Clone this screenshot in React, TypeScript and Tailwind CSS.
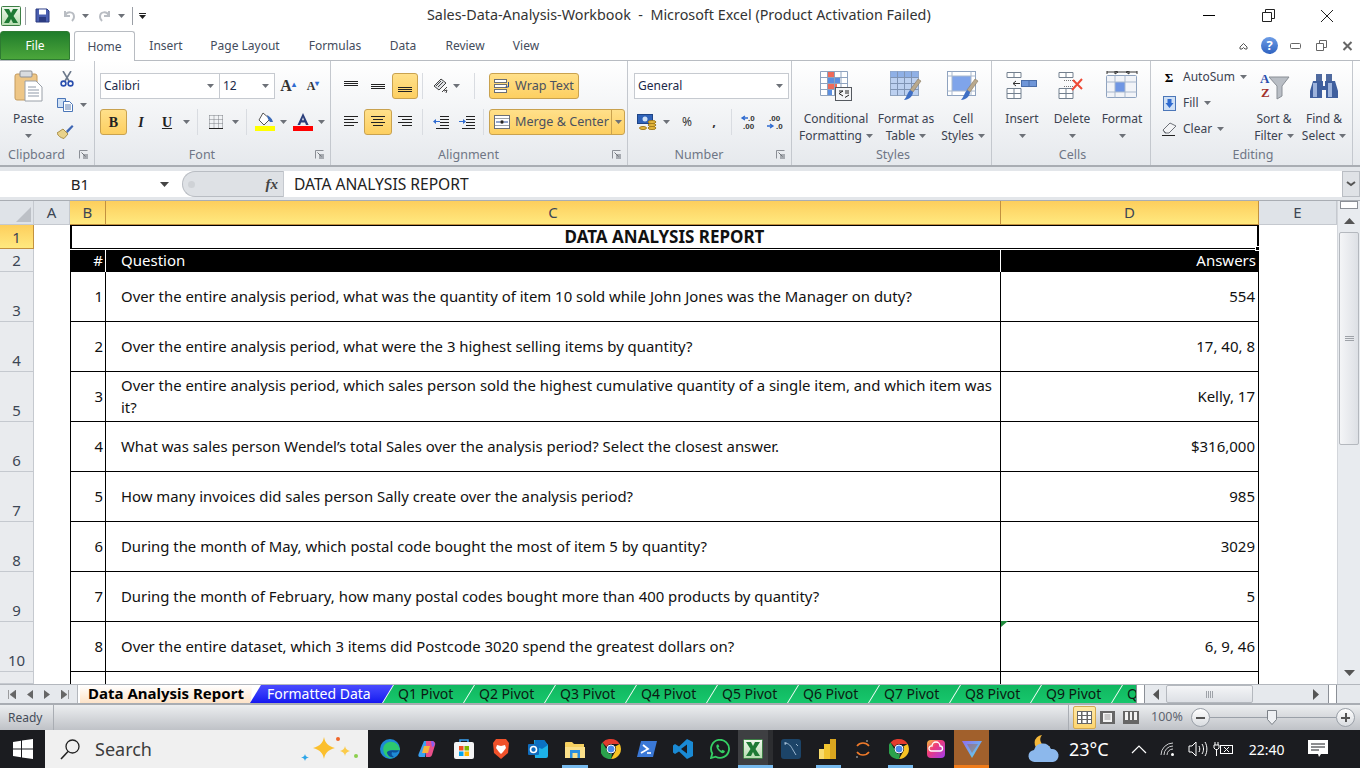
// App.tsx - Excel 2010 window
import type { ReactNode } from 'react'

const Caret = ({ className = '' }: { className?: string }) => (
  <svg width="7" height="4" viewBox="0 0 7 4" className={'shrink-0 ' + className}><path d="M0 0h7L3.5 4z" fill="#6d7178" /></svg>
)

const Launcher = () => (
  <svg width="10" height="10" viewBox="0 0 10 10"><path d="M.5.5h8M.5.5v8" stroke="#8b8f96" fill="none" /><rect x="4" y="4" width="5" height="5" fill="#a6aab0" /><path d="M2.5 2.5l4 4" stroke="#70747a" /></svg>
)

// the double line between two ribbon groups
function Group({ className, label, launcher, children }: { className: string; label: string; launcher?: boolean; children: ReactNode }) {
  return (
    <div className={'flex flex-col h-full border-r border-[#c4c8ce] ' + className}>
      <div className="h-[85px] flex">{children}</div>
      <div className={'h-[20px] flex items-center relative pt-px ' + (launcher ? 'pr-[21px]' : 'pl-[3px]')}>
        <div className="w-full text-center text-[12.5px] text-[#6f7685]">{label}</div>
        {launcher && <div className="absolute right-[5px] top-[5px]"><Launcher /></div>}
      </div>
    </div>
  )
}

function BigBtn({ className, icon, l1, l2, caretOwn }: { className: string; icon: ReactNode; l1: string; l2?: string; caretOwn?: boolean }) {
  return (
    <div className={'flex flex-col items-center pt-[9px] shrink-0 ' + className}>
      <div className="h-[32px] mb-[8px] flex items-center justify-center">{icon}</div>
      <div className="text-[12px] leading-[17px] text-[#3b4250] whitespace-nowrap">{l1}</div>
      {caretOwn
        ? <div className="h-[17px] flex items-center"><Caret /></div>
        : <div className="text-[12px] leading-[17px] text-[#3b4250] whitespace-nowrap flex items-center gap-[4px]">{l2}<Caret /></div>}
    </div>
  )
}

const Slot = ({ className, hi, children }: { className: string; hi?: boolean; children?: ReactNode }) => (
  <div className={'h-[26px] flex items-center justify-center shrink-0 ' + (hi ? 'rounded-[3px] border border-[#c9a24f] bg-gradient-to-b from-[#ffe08a] to-[#fdcf60] ' : '') + className}>{children}</div>
)

const Sep = ({ className }: { className: string }) => (
  <div className={'h-[26px] flex justify-center shrink-0 ' + className}><div className="w-px h-full bg-[#d9dce1]" /></div>
)

const Combo = ({ className, text }: { className: string; text: string }) => (
  <div className={'h-[26px] bg-white border border-[#c6cad0] flex items-center justify-between pl-[3px] pr-[5px] text-[12px] text-[#1b2a4a] shrink-0 ' + className}>
    <span>{text}</span><Caret />
  </div>
)

const Lines = ({ ys, x1s }: { ys: number[]; x1s?: [number, number][] }) => (
  <svg width="16" height="16" viewBox="0 0 16 16">
    {ys.map((y, i) => <path key={i} d={`M${x1s ? x1s[i][0] : 1} ${y + 0.5}H${x1s ? x1s[i][1] : 15}`} stroke="#222" />)}
  </svg>
)

const WinBox = () => <svg width="13" height="13" viewBox="0 0 13 13"><path d="M.5 3.5h9v9h-9zM3.5 3.5v-3h9v9h-3" fill="none" stroke="#222" /></svg>

// ---- ribbon icons ----
const PasteIcon = () => (
  <svg width="30" height="32" viewBox="0 0 30 32">
    <rect x="1" y="4" width="22" height="26" rx="2" fill="#eec686" stroke="#c49b5e" />
    <rect x="6" y="1" width="12" height="6" rx="1" fill="#d9dce0" stroke="#8b8f96" />
    <path d="M11 11h11l6 6v14H11z" fill="#fff" stroke="#9aa0a8" />
    <path d="M14 17h8M14 20h11M14 23h11M14 26h11" stroke="#8f99a8" />
  </svg>
)
const CutIcon = () => (
  <svg width="14" height="16" viewBox="0 0 14 16"><path d="M3 0l6 10M11 0L5 10" stroke="#6d7a8c" strokeWidth="1.6" /><circle cx="3.5" cy="12.5" r="2.4" fill="none" stroke="#2a4fae" strokeWidth="1.6" /><circle cx="10.5" cy="12.5" r="2.4" fill="none" stroke="#2a4fae" strokeWidth="1.6" /></svg>
)
const CopyIcon = () => (
  <svg width="16" height="14" viewBox="0 0 16 14"><path d="M.5.5h8v9h-8z" fill="#cfe0f5" stroke="#4b76b8" /><path d="M6.5 3.5h6l3 3v7h-9z" fill="#fff" stroke="#4b76b8" /><path d="M8 7h6M8 9h6M8 11h6" stroke="#5a7cb0" /></svg>
)
const PainterIcon = () => (
  <svg width="17" height="15" viewBox="0 0 17 15"><path d="M0 9l6-4 5 5-4 4.5C4 14 1 12 0 9z" fill="#e9d28a" stroke="#a98f4a" /><path d="M9 7l6-6 1.5 1.5-6 6.5z" fill="#3e66b3" /></svg>
)
const FillIcon = () => (
  <svg width="20" height="20" viewBox="0 0 20 20"><path d="M8 1l7 6-6 6-5-5z" fill="#fff" stroke="#555" /><path d="M12 3c2 1 5 3 6 7h-3l-2-3z" fill="#3b6ab8" /><rect x="0" y="14" width="20" height="5" fill="#ffff00" /></svg>
)
const FontColorIcon = () => (
  <svg width="20" height="20" viewBox="0 0 20 20"><path d="M10 1L4.5 13h2.6l1-2.6h3.9l1 2.6h2.6zM9 8.3l1-3 1 3z" fill="#2b3f7c" /><rect x="0" y="14" width="20" height="5" fill="#ff0000" /></svg>
)
const CellGrid = () => (
  <svg width="14" height="14" viewBox="0 0 14 14"><path d="M.5.5h13M.5 4.500h13M.5 8.500h13M.5.5v13M5 .5v13M9.500.5v13M13.500.5v13" stroke="#7d8187" strokeDasharray="1 1" /><path d="M0 13.500h14" stroke="#222" /></svg>
)
const OrientIcon = () => (
  <svg width="16" height="16" viewBox="0 0 16 16"><path d="M1 8l7-7 5 4-7 7z" fill="#dfe2e6" stroke="#444" /><path d="M3 8l5-5M5 9l5-5" stroke="#444" /><path d="M9 14l5-5M11 13l3-1-1 3" stroke="#444" fill="none" /></svg>
)
const IndentIcon = ({ flip }: { flip?: boolean }) => (
  <svg width="16" height="16" viewBox="0 0 16 16"><path d="M7 2.5h9M7 5.5h9M7 8.5h9M7 11.5h9M3 14.5h13" stroke="#222" /><path d={flip ? 'M0 7h4V5l3 2.5L4 10V8H0z' : 'M7 7H3V5L0 7.5 3 10V8h4z'} fill="#2f6bd0" /></svg>
)
const WrapIcon = () => (
  <svg width="17" height="15" viewBox="0 0 17 15"><rect x=".5" y=".5" width="12" height="3" fill="#fff" stroke="#6b6f76" /><rect x=".5" y="5.5" width="12" height="3" fill="#fff" stroke="#6b6f76" /><rect x=".5" y="10.5" width="12" height="3" fill="#fff" stroke="#6b6f76" /><path d="M14.500 3v5h-3" fill="none" stroke="#2b4f9a" /></svg>
)
const MergeIcon = () => (
  <svg width="16" height="14" viewBox="0 0 16 14"><rect x=".5" y=".5" width="15" height="13" fill="#fff" stroke="#6b6f76" /><path d="M1 3.500h14M1 10.500h14" stroke="#9da2a9" /><path d="M2 7h4M14 7h-4" stroke="#2b4f9a" /><circle cx="8" cy="7" r="1.800" fill="#222" /></svg>
)
const MoneyIcon = () => (
  <svg width="20" height="17" viewBox="0 0 20 17"><rect x=".5" y=".5" width="15" height="9" fill="#2f62b8" stroke="#1e4486" /><circle cx="8" cy="5" r="2.500" fill="#cfe0f5" /><ellipse cx="15" cy="8" rx="4" ry="1.500" fill="#e8b93f" stroke="#a17b1d" /><ellipse cx="15" cy="11" rx="4" ry="1.500" fill="#e8b93f" stroke="#a17b1d" /><ellipse cx="15" cy="14" rx="4" ry="1.500" fill="#e8b93f" stroke="#a17b1d" /><ellipse cx="6" cy="14" rx="3.500" ry="1.500" fill="#e8b93f" stroke="#a17b1d" /></svg>
)
const DecIcon = ({ more }: { more?: boolean }) => (
  <svg width="20" height="15" viewBox="0 0 20 15">
    <path d={more ? 'M1 11h6M4 9l3 2-3 2' : 'M8 3H2M5 1L2 3l3 2'} stroke="#2f6bd0" fill="none" strokeWidth="1.300" />
    <text x={more ? 3 : 8} y="6" fontSize="8" fontWeight="700" fontFamily="Liberation Sans, sans-serif" fill="#333">{more ? '.00' : '.0'}</text>
    <text x={more ? 10 : 3} y="14" fontSize="8" fontWeight="700" fontFamily="Liberation Sans, sans-serif" fill="#333">{more ? '.0' : '.00'}</text>
  </svg>
)
const Brush = () => (
  <g><path d="M28 8l3 2-8 11-3-2z" fill="#b9a98e" stroke="#8a7b62" strokeWidth=".6" /><path d="M20 19l3 2c0 4-4 8-9 8 3-3 3-7 6-10z" fill="#3f6fc4" /></g>
)
const CondIcon = () => (
  <svg width="32" height="30" viewBox="0 0 32 30">
    <path d="M.5.5h27v24H.5z" fill="#fff" stroke="#8fa3bf" />
    <rect x="7" y="1" width="7" height="5" fill="#ee6a5a" /><rect x="7" y="7" width="13" height="5" fill="#5b8fe0" /><rect x="7" y="13" width="10" height="5" fill="#ee6a5a" /><rect x="7" y="19" width="5" height="5" fill="#5b8fe0" />
    <path d="M7.500.5v24M14.500.5v24M21 .5v24M.5 6.500h27M.5 12.500h27M.5 18.500h27" stroke="#8fa3bf" fill="none" />
    <rect x="15.500" y="16.500" width="16" height="13" fill="#f4f5f7" stroke="#55595f" />
    <path d="M19 20h4l-4 2.500 4 2.500M25 20h4M25 22h4M29 24l-4 2.500" stroke="#222" fill="none" />
  </svg>
)
const TableIcon = () => (
  <svg width="32" height="30" viewBox="0 0 32 30">
    <rect x=".5" y=".5" width="28" height="24" fill="#bcd0f0" stroke="#8fa3bf" />
    <rect x=".5" y=".5" width="28" height="6" fill="#8fb0e6" />
    <path d="M7.500.5v24M14.500.5v24M21.500.5v24M.5 6.500h28M.5 12.500h28M.5 18.500h28" stroke="#7f94b5" fill="none" /><Brush />
  </svg>
)
const StylesIcon = () => (
  <svg width="32" height="30" viewBox="0 0 32 30">
    <rect x=".5" y=".5" width="28" height="24" fill="#fff" stroke="#8fa3bf" />
    <rect x="5" y="5" width="19" height="15" fill="#7fa4ea" />
    <path d="M5 .5v24M24 .5v24M.5 5h28M.5 20h28" stroke="#a9b8cd" fill="none" /><Brush />
  </svg>
)
const InsertIcon = () => (
  <svg width="32" height="28" viewBox="0 0 32 28">
    <path d="M1 .5h14v5H1zM8 .5v5M1 16.500h14v10H1zM8 16.500v10M1 21.500h14" fill="#fff" stroke="#73808f" />
    <rect x="15.500" y="8.500" width="15" height="6" fill="#6f96d8" stroke="#4b6ea8" /><path d="M23 8.500v6" stroke="#4b6ea8" />
    <path d="M7 11.500h7M7 11.500l3-2.500M7 11.500l3 2.500" stroke="#333" fill="none" />
  </svg>
)
const DeleteIcon = () => (
  <svg width="28" height="28" viewBox="0 0 28 28">
    <path d="M1 .5h14v5H1zM8 .5v5M1 16.500h14v10H1zM8 16.500v10M1 21.500h14" fill="#fff" stroke="#73808f" />
    <path d="M6 8.500h12M6 14.500h12" stroke="#777" strokeDasharray="1 1" />
    <path d="M15 8l9 9M24 7l-10 11" stroke="#ee4a36" strokeWidth="2" />
  </svg>
)
const FormatIcon = () => (
  <svg width="32" height="30" viewBox="0 0 32 30">
    <path d="M1 1h30M1 0v3M31 0v3M12 1l-3-1v3zM20 1l3-1v3z" stroke="#333" fill="none" />
    <rect x=".5" y="4.500" width="30" height="22" rx="1" fill="#f2f4f8" stroke="#8fa3bf" />
    <rect x="9" y="11" width="10" height="10" fill="#6f96e4" />
    <path d="M9 4.500v22M19 4.500v22M.5 11h30M.5 21h30" stroke="#a9b8cd" fill="none" />
  </svg>
)
const SigmaIcon = () => <div className="text-[13px] font-bold leading-none text-black [font-family:'Liberation_Serif',serif]">Σ</div>
const FillDownIcon = () => (
  <svg width="13" height="15" viewBox="0 0 13 15"><rect x=".5" y=".5" width="12" height="14" fill="#cfe0f5" stroke="#4b76b8" /><path d="M4.500 3h4v4h2l-4 5-4-5h2z" fill="#2f6bd0" /></svg>
)
const EraserIcon = () => (
  <svg width="15" height="14" viewBox="0 0 15 14"><path d="M1 8l7-7 6 3-7 7H3z" fill="#f3f4f6" stroke="#6d7178" /><path d="M1 8l3 3" stroke="#6d7178" /><path d="M0 13.500h13" stroke="#222" /></svg>
)
const SortIcon = () => (
  <svg width="31" height="30" viewBox="0 0 31 30">
    <path d="M10 6h20l-7 9v10l-5 3V15z" fill="#b9bec5" stroke="#8a8f96" />
    <text x="1" y="12" fontSize="13" fontWeight="700" fontFamily="Liberation Serif, serif" fill="#2a4fae">A</text>
    <text x="2" y="26" fontSize="13" fontWeight="700" fontFamily="Liberation Serif, serif" fill="#a3322c">Z</text>
  </svg>
)
const FindIcon = () => (
  <svg width="28" height="26" viewBox="0 0 28 26">
    <path d="M6 1h6v7H6zM16 1h6v7h-6z" fill="#4f6a9f" />
    <path d="M3 8h10v5h2V8h10l3 10v7H16v-8h-4v8H0v-7z" fill="#3f5f9e" />
    <path d="M3 10h4v14H3zM18 10h4v14h-4z" fill="#9db3dc" />
  </svg>
)

// ---- sheet data ----
const rows = [
  { n: 3, id: '1', q: 'Over the entire analysis period, what was the quantity of item 10 sold while John Jones was the Manager on duty?', a: '554' },
  { n: 4, id: '2', q: 'Over the entire analysis period, what were the 3 highest selling items by quantity?', a: '17, 40, 8' },
  { n: 5, id: '3', q: 'Over the entire analysis period, which sales person sold the highest cumulative quantity of a single item, and which item was', q2: 'it?', a: 'Kelly, 17' },
  { n: 6, id: '4', q: 'What was sales person Wendel’s total Sales over the analysis period? Select the closest answer.', a: '$316,000' },
  { n: 7, id: '5', q: 'How many invoices did sales person Sally create over the analysis period?', a: '985' },
  { n: 8, id: '6', q: 'During the month of May, which postal code bought the most of item 5 by quantity?', a: '3029' },
  { n: 9, id: '7', q: 'During the month of February, how many postal codes bought more than 400 products by quantity?', a: '5' },
  { n: 10, id: '8', q: 'Over the entire dataset, which 3 items did Postcode 3020 spend the greatest dollars on?', a: '6, 9, 46', flag: true },
]

const ColHead = ({ className, hi, children }: { className: string; hi?: boolean; children: ReactNode }) => (
  <div className={'h-full flex items-center justify-center text-[15px] text-[#3c4654] border-b border-r shrink-0 ' + (hi ? 'bg-gradient-to-b from-[#fdce5c] to-[#ffe97f] border-[#c2913f] ' : 'bg-[#dfe3e8] border-[#c5c9cf] ') + className}>{children}</div>
)
const RowHead = ({ n, hi }: { n: number | ''; hi?: boolean }) => (
  <div className={'w-[34px] h-full shrink-0 flex items-end justify-center text-[15px] leading-[20px] text-[#3c4654] border-b border-r pb-px ' + (hi ? 'bg-gradient-to-b from-[#fdce5c] to-[#ffe97f] border-[#c2913f]' : 'bg-[#e9ebee] border-[#c5c9cf]')}>{n}</div>
)

function DataRow({ r }: { r: (typeof rows)[number] }) {
  return (
    <div className="flex h-[50px] shrink-0">
      <RowHead n={r.n} />
      <div className="w-[36px] shrink-0" />
      <div className="w-[36px] shrink-0 border border-t-0 border-black flex items-center justify-end pr-[2px] pb-px text-[14.9px] text-[#111]">{r.id}</div>
      <div className="w-[895px] shrink-0 border-b border-r border-black flex items-center pl-[15px] pb-[2px] text-[14.9px] leading-[22px] text-[#111]">
        <div className="whitespace-nowrap">{r.q}{r.q2 && <><br />{r.q2}</>}</div>
      </div>
      <div className="w-[258px] shrink-0 border-b border-r border-black flex items-center justify-end pr-[3px] pb-px text-[15px] text-[#111] relative">
        {r.flag && <svg width="7" height="6" viewBox="0 0 7 6" className="absolute left-0 -top-px"><path d="M0 0h7L0 6z" fill="#1f8a3c" /></svg>}
        {r.a}
      </div>
    </div>
  )
}

// ---- bottom sheet tabs ----
const qTabs = ['Q1 Pivot', 'Q2 Pivot', 'Q3 Pivot', 'Q4 Pivot', 'Q5 Pivot', 'Q6 Pivot', 'Q7 Pivot', 'Q8 Pivot', 'Q9 Pivot', 'Q']

// ---- taskbar logos ----
const ChromeLogo = () => (
  <svg width="20" height="20" viewBox="0 0 20 20">
    <path d="M10 0a10 10 0 0 1 8.660 5H10a5 5 0 0 0-4.500 2.800L1.500 3.500A10 10 0 0 1 10 0z" fill="#e33b2e" />
    <path d="M18.660 5A10 10 0 0 1 10 20l4.300-7.500A5 5 0 0 0 14.300 7.500z" fill="#f7c325" />
    <path d="M10 20A10 10 0 0 1 1.500 3.500l4 7A5 5 0 0 0 11 15z" fill="#2ba24c" />
    <circle cx="10" cy="10" r="4" fill="#4a88ec" stroke="#fff" />
  </svg>
)
const ExcelMark = () => (
  <svg width="20" height="20" viewBox="0 0 20 20">
    <defs><linearGradient id="xl" x1="0" y1="0" x2="0" y2="1"><stop offset="0" stopColor="#f1f8ee" /><stop offset="1" stopColor="#b5dcae" /></linearGradient></defs>
    <rect x=".5" y=".5" width="19" height="19" rx="1" fill="url(#xl)" stroke="#3d7f45" />
    <path d="M3 3h5l2 4 2-4h5l-4.500 7 4.500 7h-5l-2-4-2 4H3l4.500-7z" fill="#1f7a35" />
  </svg>
)
const TaskIcon = ({ className, children }: { className: string; children: ReactNode }) => (
  <div className={'h-full flex items-center justify-center shrink-0 relative ' + className}>{children}</div>
)
const Underline = ({ className }: { className: string }) => <div className={'absolute bottom-0 h-[3px] bg-[#76b9ed] ' + className} />

export default function App() {
  return (
    <div className="w-[1360px] h-[768px] overflow-hidden flex flex-col bg-white [font-family:'Noto_Sans',sans-serif]">
      {/* title bar */}
      <div className="h-[31px] flex items-center relative shrink-0">
        <div className="ml-[1px]"><ExcelMark /></div>
        <div className="w-px h-[18px] bg-[#9a9ea5] ml-[4px]" />
        <svg width="15" height="15" viewBox="0 0 15 15" className="ml-[9px]"><path d="M1 1h11l2 2v11H1z" fill="#4a5fb0" stroke="#2b3b80" /><rect x="4" y="1.500" width="7" height="5" fill="#fff" /><rect x="4" y="9" width="7" height="5" fill="#2b3b80" /></svg>
        <svg width="13" height="13" viewBox="0 0 13 13" className="ml-[13px]"><path d="M2 2v5h5M2 7c2-5 9-5 9 1 0 2-1 3-2 4" fill="none" stroke="#b9bdc3" strokeWidth="2" /></svg>
        <Caret className="ml-[6px]" />
        <svg width="13" height="13" viewBox="0 0 13 13" className="ml-[9px]"><path d="M11 2v5H6M11 7C9 2 2 2 2 8c0 2 1 3 2 4" fill="none" stroke="#b9bdc3" strokeWidth="2" /></svg>
        <Caret className="ml-[7px]" />
        <div className="w-px h-[18px] bg-[#9a9ea5] ml-[7px]" />
        <svg width="7" height="6" viewBox="0 0 7 6" className="ml-[6px]"><path d="M0 0h7v1H0zM0 2h7L3.500 6z" fill="#222" /></svg>
        <div className="absolute left-[427px] top-[5px] text-[14.35px] leading-[20px] text-[#333] whitespace-pre">Sales-Data-Analysis-Workbook  -  Microsoft Excel (Product Activation Failed)</div>
        <div className="ml-auto flex items-center pr-[3px]">
          <div className="w-[60px] flex justify-center"><div className="w-[12px] h-px bg-black" /></div>
          <div className="w-[58px] flex justify-center"><WinBox /></div>
          <div className="w-[60px] flex justify-center"><svg width="14" height="14" viewBox="0 0 14 14"><path d="M1 1l12 12M13 1L1 13" stroke="#222" /></svg></div>
        </div>
      </div>

      {/* ribbon tabs */}
      <div className="h-[29px] flex shrink-0 relative">
        <div className="w-[70px] h-full rounded-t-[3px] border border-[#2d7a31] bg-gradient-to-b from-[#1f7d2b] to-[#4aa63b] text-white text-[12px] flex items-center justify-center">File</div>
        <div className="ml-[4px] w-[61px] h-[30px] rounded-t-[3px] border border-b-0 border-[#b8bcc2] bg-white text-[12px] text-[#444c5c] flex items-center justify-center z-10">Home</div>
        {[['Insert', 'w-[62px]'], ['Page Layout', 'w-[96px]'], ['Formulas', 'w-[84px]'], ['Data', 'w-[52px]'], ['Review', 'w-[72px]'], ['View', 'w-[50px]']].map(([t, w]) => (
          <div key={t} className={'h-full text-[12px] text-[#444c5c] flex items-center justify-center ' + w}>{t}</div>
        ))}
        <div className="ml-auto flex items-center pr-[7px]">
          <svg width="9" height="8" viewBox="0 0 9 8"><path d="M1 7V5l3.500-3.500L8 5v2H6L4.500 5.500 3 7z" fill="none" stroke="#555" /></svg>
          <div className="ml-[13px] w-[17px] h-[17px] rounded-full bg-gradient-to-b from-[#6d9de6] to-[#2f62c0] text-white text-[13px] font-bold leading-none flex items-center justify-center">?</div>
          <svg width="11" height="6" viewBox="0 0 11 6" className="ml-[12px]"><rect x=".5" y=".5" width="10" height="5" rx="1" fill="none" stroke="#666" /></svg>
          <svg width="11" height="11" viewBox="0 0 11 11" className="ml-[15px]"><path d="M.5 3.500h7v7h-7zM3.500 3.500v-3h7v7h-3" fill="none" stroke="#666" /></svg>
          <svg width="11" height="10" viewBox="0 0 11 10" className="ml-[15px]"><path d="M1.500 1l8 8M9.500 1l-8 8" stroke="#666" strokeWidth="2" /></svg>
        </div>
      </div>

      {/* ribbon */}
      <div className="h-[107px] shrink-0 flex border-t border-b-2 border-t-[#b8bcc2] border-b-[#a9adb3] bg-gradient-to-b from-white to-[#e6e9ed]">
        <Group className="w-[95px]" label="Clipboard" launcher>
          <div className="w-[57px] flex flex-col items-center pt-[9px]">
            <div className="h-[32px] mb-[8px]"><PasteIcon /></div>
            <div className="text-[12px] leading-[17px] text-[#3b4250]">Paste</div>
            <div className="h-[17px] flex items-center"><Caret /></div>
          </div>
          <div className="flex flex-col pt-[5px]">
            <div className="h-[26px] flex items-center pl-[3px]"><CutIcon /></div>
            <div className="h-[26px] flex items-center gap-[7px]"><CopyIcon /><Caret /></div>
            <div className="h-[26px] flex items-center"><PainterIcon /></div>
          </div>
        </Group>

        <Group className="w-[236px]" label="Font" launcher>
          <div className="flex flex-col pt-[12px] pl-[5px] gap-[10px]">
            <div className="flex">
              <Combo className="w-[120px]" text="Calibri" />
              <Combo className="w-[56px] -ml-px" text="12" />
              <Slot className="w-[26px]"><span className="text-[16px] font-bold text-[#333] [font-family:'Liberation_Serif',serif]">A<sup className="text-[8px] text-[#2f6bd0]">▴</sup></span></Slot>
              <Slot className="w-[24px]"><span className="text-[12px] font-bold text-[#333] [font-family:'Liberation_Serif',serif]">A<sup className="text-[8px] text-[#2f6bd0]">▾</sup></span></Slot>
            </div>
            <div className="flex">
              <Slot hi className="w-[27px] text-[14px] font-bold text-[#222] [font-family:'Liberation_Serif',serif]">B</Slot>
              <Slot className="w-[28px] text-[14px] italic font-bold text-[#222] [font-family:'Liberation_Serif',serif]">I</Slot>
              <Slot className="w-[24px] text-[14px] font-bold underline text-[#222] [font-family:'Liberation_Serif',serif]">U</Slot>
              <Slot className="w-[14px]"><Caret /></Slot>
              <Sep className="w-[8px]" />
              <Slot className="w-[30px]"><CellGrid /></Slot>
              <Slot className="w-[8px]"><Caret /></Slot>
              <Sep className="w-[14px]" />
              <Slot className="w-[24px]"><FillIcon /></Slot>
              <Slot className="w-[12px]"><Caret /></Slot>
              <Slot className="w-[28px]"><FontColorIcon /></Slot>
              <Slot className="w-[8px]"><Caret /></Slot>
            </div>
          </div>
        </Group>

        <Group className="w-[297px]" label="Alignment" launcher>
          <div className="flex flex-col pt-[12px] pl-[7px] gap-[10px]">
            <div className="flex">
              <Slot className="w-[26px]"><Lines ys={[3, 5, 7]} /></Slot>
              <Slot className="w-[28px]"><Lines ys={[6, 8, 10]} /></Slot>
              <Slot hi className="w-[26px]"><Lines ys={[9, 11, 13]} /></Slot>
              <Sep className="w-[8px]" />
              <Slot className="ml-[7px] w-[16px]"><OrientIcon /></Slot>
              <Slot className="ml-[4px] w-[7px]"><Caret /></Slot>
              <Sep className="w-[29px]" />
              <Slot hi className="w-[90px] gap-[4px] text-[12.6px] text-[#4a5160]"><WrapIcon /><span>Wrap Text</span></Slot>
            </div>
            <div className="flex">
              <Slot className="w-[26px]"><Lines ys={[2, 5, 8, 11]} x1s={[[1, 15], [1, 11], [1, 15], [1, 11]]} /></Slot>
              <Slot hi className="w-[28px]"><Lines ys={[2, 5, 8, 11]} x1s={[[1, 15], [3, 13], [1, 15], [3, 13]]} /></Slot>
              <Slot className="w-[26px]"><Lines ys={[2, 5, 8, 11]} x1s={[[1, 15], [5, 15], [1, 15], [5, 15]]} /></Slot>
              <Sep className="w-[8px]" />
              <Slot className="ml-[5px] w-[20px]"><IndentIcon /></Slot>
              <Slot className="ml-[6px] w-[20px]"><IndentIcon flip /></Slot>
              <Sep className="w-[12px]" />
              <div className="h-[26px] w-[136px] flex rounded-[3px] border border-[#c9a24f] bg-gradient-to-b from-[#ffe08a] to-[#fdcf60] text-[12.6px] text-[#4a5160]">
                <div className="flex-1 flex items-center pl-[4px] gap-[5px] whitespace-nowrap"><MergeIcon /><span>Merge &amp; Center</span></div>
                <div className="w-[13px] border-l border-[#c9a24f] flex items-center justify-center"><Caret /></div>
              </div>
            </div>
          </div>
        </Group>

        <Group className="w-[164px]" label="Number" launcher>
          <div className="flex flex-col pt-[12px] pl-[6px] gap-[10px]">
            <Combo className="w-[155px]" text="General" />
            <div className="flex">
              <Slot className="w-[26px]"><MoneyIcon /></Slot>
              <Slot className="w-[12px]"><Caret /></Slot>
              <Slot className="w-[30px] text-[12px] text-[#333]">%</Slot>
              <Slot className="w-[24px] text-[13px] font-bold text-[#333]">,</Slot>
              <Sep className="w-[10px]" />
              <Slot className="ml-[2px] w-[24px]"><DecIcon /></Slot>
              <Slot className="ml-[2px] w-[24px]"><DecIcon more /></Slot>
            </div>
          </div>
        </Group>

        <Group className="w-[200px]" label="Styles">
          <BigBtn className="ml-[5px] w-[78px]" icon={<CondIcon />} l1="Conditional" l2="Formatting" />
          <BigBtn className="w-[62px]" icon={<TableIcon />} l1="Format as" l2="Table" />
          <BigBtn className="w-[52px]" icon={<StylesIcon />} l1="Cell" l2="Styles" />
        </Group>

        <Group className="w-[159px]" label="Cells">
          <BigBtn className="ml-[5px] w-[50px]" icon={<InsertIcon />} l1="Insert" caretOwn />
          <BigBtn className="w-[50px]" icon={<DeleteIcon />} l1="Delete" caretOwn />
          <BigBtn className="w-[50px]" icon={<FormatIcon />} l1="Format" caretOwn />
        </Group>

        <Group className="w-[202px]" label="Editing">
          <div className="w-[98px] flex flex-col pt-[3px] pl-[9px] text-[12px] text-[#3b4250]">
            <div className="h-[26px] flex items-center"><div className="w-[23px] flex justify-center pr-[5px]"><SigmaIcon /></div>AutoSum<Caret className="ml-[5px]" /></div>
            <div className="h-[26px] flex items-center"><div className="w-[23px] flex justify-center pr-[5px]"><FillDownIcon /></div>Fill<Caret className="ml-[5px]" /></div>
            <div className="h-[26px] flex items-center"><div className="w-[23px] flex justify-center pr-[5px]"><EraserIcon /></div>Clear<Caret className="ml-[5px]" /></div>
          </div>
          <BigBtn className="w-[50px]" icon={<SortIcon />} l1="Sort &" l2="Filter" />
          <BigBtn className="w-[50px]" icon={<FindIcon />} l1="Find &" l2="Select" />
        </Group>
      </div>

      {/* formula bar */}
      <div className="h-[34px] shrink-0 flex flex-col bg-[#e3e6ea]">
        <div className="h-[26px] mt-[4px] flex bg-white">
          <div className="w-[178px] flex items-center text-[15px] text-[#222] relative">
            <div className="w-[160px] text-center">B1</div>
            <svg width="9" height="5" viewBox="0 0 9 5"><path d="M0 0h9L4.500 5z" fill="#444" /></svg>
          </div>
          <div className="ml-[4px] w-[101px] rounded-l-full bg-[#dee1e5] border border-r-0 border-[#b9bdc3] flex items-center justify-between pl-[5px] pr-[5px]">
            <div className="w-[7px] h-[7px] rounded-full bg-[#cfd2d6]" />
            <span className="text-[15px] italic font-bold text-[#444] [font-family:'Liberation_Serif',serif]">fx</span>
          </div>
          <div className="flex-1 flex items-center pl-[10px] pt-px text-[15.6px] text-[#222] border-l border-[#c5c9cf]">DATA ANALYSIS REPORT</div>
          <div className="w-[18px] bg-[#dfe2e6] border border-[#b9bdc3] flex items-center justify-center">
            <svg width="10" height="7" viewBox="0 0 10 7"><path d="M1 1l4 3 4-3" fill="none" stroke="#555" strokeWidth="2" /></svg>
          </div>
        </div>
        <div className="mt-auto h-px bg-[#a9adb3]" />
      </div>

      {/* sheet */}
      <div className="h-[483px] shrink-0 flex">
        <div className="w-[1337px] shrink-0 flex flex-col overflow-hidden">
          <div className="h-[24px] flex shrink-0">
            <div className="w-[34px] h-full shrink-0 bg-[#dfe3e8] border-b border-r border-[#c5c9cf] flex items-end justify-end p-[2px]">
              <svg width="15" height="15" viewBox="0 0 15 15"><path d="M15 0v15H0z" fill="#bcc0c6" /></svg>
            </div>
            <ColHead className="w-[36px]">A</ColHead>
            <ColHead hi className="w-[36px]">B</ColHead>
            <ColHead hi className="w-[895px]">C</ColHead>
            <ColHead hi className="w-[258px]">D</ColHead>
            <ColHead className="w-[78px]">E</ColHead>
          </div>

          <div className="flex h-[24px] shrink-0 relative z-10">
            <RowHead n={1} hi />
            <div className="w-[36px] shrink-0" />
            <div className="w-[1189px] shrink-0 border-2 border-y border-black flex items-center justify-center text-[17px] font-bold text-[#111] relative">
              DATA ANALYSIS REPORT
              <div className="absolute -right-[3px] -bottom-[3px] w-[5px] h-[5px] bg-black border border-white" />
            </div>
          </div>

          <div className="flex h-[23px] shrink-0">
            <RowHead n={2} />
            <div className="w-[36px] shrink-0" />
            <div className="w-[36px] shrink-0 mt-px pb-[2px] bg-black border-r border-white text-white flex items-center justify-end pr-[2px] text-[15px]">#</div>
            <div className="w-[895px] shrink-0 mt-px pb-[2px] bg-black border-r border-white text-white flex items-center pl-[15px] text-[15px]">Question</div>
            <div className="w-[258px] shrink-0 mt-px pb-[2px] bg-black text-white flex items-center justify-end pr-[3px] text-[15px]">Answers</div>
          </div>

          {rows.map(r => <DataRow key={r.n} r={r} />)}

          <div className="flex h-[12px] shrink-0">
            <RowHead n="" />
            <div className="w-[36px] shrink-0" />
            <div className="w-[36px] shrink-0 border-x border-black" />
            <div className="w-[895px] shrink-0 border-r border-black" />
            <div className="w-[258px] shrink-0 border-r border-black" />
          </div>
        </div>

        {/* vertical scrollbar */}
        <div className="w-[23px] shrink-0 flex flex-col bg-[#e8ebef] border-l border-[#d3d6db]">
          <div className="h-[8px] mx-[2px] bg-white border border-[#8b8f96]" />
          <div className="h-[23px] flex items-center justify-center"><svg width="11" height="6" viewBox="0 0 11 6"><path d="M5.500 0L11 6H0z" fill="#555" /></svg></div>
          <div className="h-[213px] mx-px rounded-[2px] border border-[#b4b8be] bg-gradient-to-r from-[#f4f5f7] to-[#dde0e5] flex items-center justify-center">
            <svg width="9" height="6" viewBox="0 0 9 6"><path d="M0 .5h9M0 2.500h9M0 4.500h9" stroke="#9ea2a8" /></svg>
          </div>
          <div className="mt-auto h-[22px] flex items-center justify-center"><svg width="11" height="6" viewBox="0 0 11 6"><path d="M5.500 6L11 0H0z" fill="#555" /></svg></div>
        </div>
      </div>

      {/* tab strip */}
      <div className="h-[21px] shrink-0 flex border-t border-b-2 border-t-[#b3b7bd] border-b-[#a9adb3] bg-white">
        <div className="w-[78px] shrink-0 bg-[#e6e9ed] border-r border-[#b3b7bd] flex items-center justify-around px-[3px]">
          <svg width="8" height="9" viewBox="0 0 8 9"><path d="M.5 0v9M8 0v9L2 4.500z" fill="#666" stroke="#666" strokeWidth=".6" /></svg>
          <svg width="6" height="9" viewBox="0 0 6 9"><path d="M6 0v9L0 4.500z" fill="#666" /></svg>
          <svg width="6" height="9" viewBox="0 0 6 9"><path d="M0 0v9l6-4.500z" fill="#666" /></svg>
          <svg width="8" height="9" viewBox="0 0 8 9"><path d="M7.500 0v9M0 0v9l6-4.500z" fill="#666" stroke="#666" strokeWidth=".6" /></svg>
        </div>
        <div className="w-[1058px] shrink-0 flex pl-[2px] overflow-hidden">
          <div className="w-[172px] shrink-0 pb-[2px] bg-gradient-to-b from-white to-[#fde3c8] flex items-center justify-center text-[15px] leading-none font-bold text-black [clip-path:polygon(0_0,100%_0,calc(100%_-_1px)_100%,0_100%)]">Data Analysis Report</div>
          <div className="w-[143px] -ml-[2px] shrink-0 pb-[2px] bg-gradient-to-b from-[#4a4aff] to-[#1414f0] text-white flex items-center pl-[17px] text-[14px] [clip-path:polygon(11px_0,100%_0,calc(100%_-_11px)_100%,0_100%)]">Formatted Data</div>
          {qTabs.map(t => (
            <div key={t} className="w-[91px] -ml-[10px] shrink-0 pb-[2px] bg-gradient-to-b from-[#10b760] to-[#17c76c] text-[#0b1a12] flex items-center pl-[15px] text-[14px] whitespace-nowrap [clip-path:polygon(11px_0,100%_0,calc(100%_-_11px)_100%,0_100%)]">{t}</div>
          ))}
        </div>
        <div className="flex-1 flex items-center bg-[#e6e9ed]">
          <div className="w-[9px] h-full bg-white border-x border-[#8b8f96]" />
          <div className="w-[21px] flex justify-center"><svg width="6" height="11" viewBox="0 0 6 11"><path d="M0 5.500L6 0v11z" fill="#555" /></svg></div>
          <div className="w-[87px] h-[18px] rounded-[2px] border border-[#b4b8be] bg-gradient-to-b from-[#f4f5f7] to-[#dde0e5] flex items-center justify-center">
            <svg width="7" height="7" viewBox="0 0 7 7"><path d="M.5 0v7M2.500 0v7M4.500 0v7M6.500 0v7" stroke="#9ea2a8" /></svg>
          </div>
          <div className="w-[75px] flex justify-end pr-[9px]"><svg width="6" height="11" viewBox="0 0 6 11"><path d="M6 5.500L0 0v11z" fill="#555" /></svg></div>
          <div className="w-[9px] h-full bg-white border-x border-[#8b8f96]" />
        </div>
        <div className="w-[23px] shrink-0 bg-[#e6e9ed]" />
      </div>

      {/* status bar */}
      <div className="h-[25px] shrink-0 flex items-center bg-gradient-to-b from-[#eceef0] to-[#bfc2c7] text-[12px] text-[#454c58]">
        <div className="w-[54px] h-full border-r border-[#a9adb3] flex items-center pl-[8px]">Ready</div>
        <div className="ml-[1014px] w-[5px] h-full border-l border-[#a9adb3]" />
        <div className="w-[23px] h-[23px] rounded-[2px] border border-[#d4a94f] bg-gradient-to-b from-[#ffe9a8] to-[#fdd56e] flex items-center justify-center">
          <svg width="15" height="13" viewBox="0 0 15 13"><rect width="15" height="13" fill="#666" /><path d="M1 1h3v3H1zM5.500 1h4v3h-4zM11 1h3v3h-3zM1 5h3v3H1zM5.500 5h4v3h-4zM11 5h3v3h-3zM1 9h3v3H1zM5.500 9h4v3h-4zM11 9h3v3h-3z" fill="#fff" /></svg>
        </div>
        <div className="w-[23px] flex justify-center">
          <svg width="15" height="13" viewBox="0 0 15 13"><rect width="15" height="13" fill="#666" /><rect x="3" y="2" width="9" height="9" fill="#f4f4f4" /><path d="M4.500 4h6M4.500 6h6M4.500 8h6" stroke="#999" /></svg>
        </div>
        <div className="w-[23px] flex justify-center">
          <svg width="16" height="13" viewBox="0 0 16 13"><rect width="16" height="13" fill="#666" /><path d="M2 1h3v8H2zM7 1h2v8H7zM11 1h3v8h-3z" fill="#f4f4f4" /></svg>
        </div>
        <div className="w-[49px] pl-[9px] text-[12.5px] text-[#5f6570]">100%</div>
        <div className="w-[19px] h-[19px] rounded-full border border-[#9aa0a8] bg-gradient-to-b from-white to-[#d9dce0] flex items-center justify-center"><div className="w-[9px] h-[2px] bg-[#555]" /></div>
        <div className="w-[126px] flex items-center relative">
          <div className="w-full h-px bg-[#9aa0a8]" />
          <svg width="10" height="15" viewBox="0 0 10 15" className="absolute left-[57px] -top-[7px]"><path d="M.5.5h9v9l-4.500 5-4.500-5z" fill="#eef0f3" stroke="#7b8087" /></svg>
        </div>
        <div className="w-[19px] h-[19px] rounded-full border border-[#9aa0a8] bg-gradient-to-b from-white to-[#d9dce0] flex items-center justify-center relative">
          <div className="w-[9px] h-[2px] bg-[#555]" />
          <div className="absolute w-[2px] h-[9px] bg-[#555]" />
        </div>
      </div>

      {/* taskbar */}
      <div className="h-[38px] shrink-0 flex bg-[#1b1c20] text-white">
        <TaskIcon className="w-[45px]">
          <svg width="20" height="20" viewBox="0 0 20 20"><path d="M0 3l8-1.200V9.500H0zM9 1.600L20 0v9.500H9zM0 10.500h8v7.700L0 17zM9 10.500h11V20L9 18.400z" fill="#fff" /></svg>
        </TaskIcon>
        <div className="w-[323px] h-full bg-[#f0f0f0] flex items-center pl-[15px] text-[18px] text-[#3c3c3c]">
          <svg width="20" height="21" viewBox="0 0 20 21" className="mr-[15px]"><circle cx="12.500" cy="7.500" r="6.500" fill="none" stroke="#222" strokeWidth="1.300" /><path d="M8 12.500L1 20" stroke="#222" strokeWidth="1.600" /></svg>
          Search
          <svg width="58" height="24" viewBox="0 0 58 24" className="ml-auto mr-[9px]">
            <path d="M23 0c1 6 4 9 11 11-7 2-10 5-11 11-1-6-4-9-11-11 7-2 10-5 11-11z" fill="#fbbf2d" />
            <path d="M44 9c.5 3 2 4 5 5-3 1-4.500 2-5 5-.5-3-2-4-5-5 3-1 4.500-2 5-5z" fill="#fbcb4a" />
            <path d="M4 17c.5 2 1 3 4 3.500-3 .5-3.500 1.500-4 3.500-.5-2-1-3-4-3.500 3-.5 3.500-1.500 4-3.500z" fill="#2ea6e8" />
            <circle cx="37" cy="2" r="2" fill="#f0662a" /><circle cx="55" cy="19" r="2" fill="#8ccf4d" />
          </svg>
        </div>
        <div className="w-[4px]" />
        <TaskIcon className="w-[36px]"><svg width="20" height="20" viewBox="0 0 20 20"><circle cx="10" cy="10" r="10" fill="#1e8ad6" /><path d="M20 11C19 5 14 2 9 3 4 4 2 9 4 14c1 3 5 6 9 5-3 0-6-3-5-6 1-2 5-3 7-1z" fill="#2dc96f" /><path d="M7 13c0 3 3 6 7 5-2-1-3-3-2-5 2 1 6 1 7-2-2 1-8-1-12 2z" fill="#0c4f9a" /></svg></TaskIcon>
        <TaskIcon className="w-[37px]"><svg width="18" height="18" viewBox="0 0 18 18"><path d="M6 1h4L7 17H2C0 17 0 15 1 13z" fill="#3aa0f0" /><path d="M8 1h6c2 0 4 2 3 4l-3 10c-1 2-2 2-4 2H8z" fill="#e94f8a" /><path d="M6 6h6l-2 7H4z" fill="#f7b33c" /><path d="M13 1c3 0 4 2 3 5l-2 1z" fill="#8a5cf0" /></svg></TaskIcon>
        <TaskIcon className="w-[37px]"><svg width="20" height="20" viewBox="0 0 20 20"><rect y="3" width="20" height="17" rx="2" fill="#f4f4f4" /><path d="M6 3V1h8v2" fill="none" stroke="#3aa0f0" strokeWidth="1.500" /><rect x="5" y="7" width="4.500" height="4.500" fill="#f25022" /><rect x="10.500" y="7" width="4.500" height="4.500" fill="#7fba00" /><rect x="5" y="12.500" width="4.500" height="4.500" fill="#00a4ef" /><rect x="10.500" y="12.500" width="4.500" height="4.500" fill="#ffb900" /></svg></TaskIcon>
        <TaskIcon className="w-[38px]"><svg width="18" height="20" viewBox="0 0 18 20"><path d="M4 0h10l3 4-1 10-7 6-7-6L1 4z" fill="#f0512a" /><path d="M5 6l4 1 4-1 1 3-3 4-2 2-2-2-3-4z" fill="#fff" /></svg></TaskIcon>
        <TaskIcon className="w-[36px]"><svg width="20" height="20" viewBox="0 0 20 20"><path d="M6 1h10l4 5v11a2 2 0 0 1-2 2H7z" fill="#1db2e8" /><path d="M7 1h9l4 5-6 4-7-3z" fill="#0a71c4" /><rect x="0" y="5" width="11" height="11" rx="1" fill="#0f6cbd" /><circle cx="5.500" cy="10.500" r="3" fill="none" stroke="#fff" strokeWidth="1.600" /></svg></TaskIcon>
        <TaskIcon className="w-[37px]">
          <svg width="20" height="17" viewBox="0 0 20 17"><path d="M0 2a1 1 0 0 1 1-1h6l2 2h10v13H0z" fill="#f6d060" /><rect x="0" y="6" width="20" height="11" fill="#fbe08a" /><rect x="5" y="9" width="10" height="8" fill="#2b8fe0" /><rect x="7.500" y="12" width="5" height="5" fill="#fbe08a" /></svg>
          <Underline className="left-[6px] right-[5px]" />
        </TaskIcon>
        <TaskIcon className="w-[36px]"><ChromeLogo /></TaskIcon>
        <TaskIcon className="w-[36px]"><svg width="20" height="16" viewBox="0 0 20 16"><path d="M4 0h16l-4 16H0z" fill="#3a78d6" /><path d="M6 4l5 4-7 4" fill="none" stroke="#fff" strokeWidth="1.800" /><path d="M10 12h4" stroke="#fff" strokeWidth="1.600" /></svg></TaskIcon>
        <TaskIcon className="w-[36px]"><svg width="20" height="20" viewBox="0 0 20 20"><path d="M14 0l6 3v14l-6 3-8-7.500L2 15l-2-1.500v-7L2 5l4 2.500z" fill="#1a8ad4" /><path d="M14 5.500L8 10l6 4.500z" fill="#1b1c20" /></svg></TaskIcon>
        <TaskIcon className="w-[37px]"><svg width="20" height="20" viewBox="0 0 20 20"><path d="M1 19l1.300-4.600A9 9 0 1 1 5.700 17.700z" fill="none" stroke="#35cf64" strokeWidth="1.800" /><path d="M7 5.500c-1 1-1 3 1 5.500s4 3.500 5.500 3c1-.3 1.500-1.500 1.300-2l-2.300-1.200-1 1c-1 0-3-2-3.200-3.200l1-1L8.300 5.500z" fill="#35cf64" /></svg></TaskIcon>
        <TaskIcon className="w-[30px] bg-[#3e3f42]">
          <ExcelMark />
          <Underline className="left-0 right-0" />
        </TaskIcon>
        <div className="w-[5px] h-full bg-[#2c2d30] relative"><Underline className="left-0 right-0" /></div>
        <TaskIcon className="w-[36px]"><svg width="20" height="20" viewBox="0 0 20 20"><rect width="20" height="20" rx="3" fill="#1c4468" /><path d="M3 4c5 0 7 3 9 7l3 5M5 3l-1 3M15 5l2 2" fill="none" stroke="#a9c3da" strokeWidth=".9" /></svg></TaskIcon>
        <TaskIcon className="w-[36px]">
          <svg width="17" height="20" viewBox="0 0 17 20"><rect x="0" y="10" width="6" height="10" fill="#f8dc6c" /><rect x="5" y="5" width="6" height="15" fill="#f2c530" /><rect x="11" y="0" width="6" height="20" fill="#d9a51f" /></svg>
          <Underline className="left-[7px] right-[4px]" />
        </TaskIcon>
        <TaskIcon className="w-[36px]"><svg width="16" height="20" viewBox="0 0 16 20"><path d="M2 7c3-4 9-4 12 0M2 13c3 4 9 4 12 0" fill="none" stroke="#ef7a2a" strokeWidth="1.600" /><circle cx="12" cy="2" r="1" fill="#888" /><circle cx="2" cy="18" r="1" fill="#888" /></svg></TaskIcon>
        <TaskIcon className="w-[36px]">
          <ChromeLogo />
          <Underline className="left-[7px] right-[4px]" />
        </TaskIcon>
        <TaskIcon className="w-[37px]"><svg width="18" height="18" viewBox="0 0 18 18"><defs><linearGradient id="cc" x1="0" y1="0" x2="1" y2="1"><stop offset="0" stopColor="#f5c63a" /><stop offset=".4" stopColor="#ee3a7a" /><stop offset="1" stopColor="#a13cf0" /></linearGradient></defs><rect width="18" height="18" rx="4" fill="url(#cc)" /><path d="M4 11a2.500 2.500 0 0 1 1-5 4 4 0 0 1 8 0 2.500 2.500 0 0 1 0 5z" fill="none" stroke="#fff" strokeWidth="1.300" /></svg></TaskIcon>
        <TaskIcon className="w-[35px] bg-[#a1602c]">
          <svg width="20" height="18" viewBox="0 0 20 18"><defs><linearGradient id="tri" x1="0" y1="0" x2="1" y2="1"><stop offset="0" stopColor="#8f6cf0" /><stop offset="1" stopColor="#5ce0e6" /></linearGradient></defs><path d="M0 1h20L10 18z" fill="url(#tri)" /><path d="M5 4h11l-6 9z" fill="#a1602c" opacity=".4" /></svg>
          <Underline className="left-0 right-0 !bg-[#f07c1a]" />
        </TaskIcon>
        <div className="w-[39px]" />
        <TaskIcon className="w-[32px]">
          <svg width="32" height="30" viewBox="0 0 32 30"><path d="M14 1a8 8 0 1 0 8 11 7 7 0 0 1-8-11z" fill="#f5b83a" /><path d="M7 28a6 6 0 0 1-1-12 9 9 0 0 1 17-1 6.500 6.500 0 0 1 2 13z" fill="#8cb8ec" /></svg>
        </TaskIcon>
        <div className="w-[9px]" />
        <div className="h-full flex items-center text-[18px] leading-none">23°C</div>
        <div className="w-[22px]" />
        <TaskIcon className="w-[16px]"><svg width="16" height="9" viewBox="0 0 16 9"><path d="M1 8l7-7 7 7" fill="none" stroke="#fff" strokeWidth="1.200" /></svg></TaskIcon>
        <div className="w-[13px]" />
        <TaskIcon className="w-[16px]"><svg width="16" height="14" viewBox="0 0 16 14"><path d="M1 13A12 12 0 0 1 13 1M4 13a9 9 0 0 1 9-9M7 13a6 6 0 0 1 6-6" fill="none" stroke="#cfd0d2" /><circle cx="12.500" cy="12.500" r="1.500" fill="#fff" /></svg></TaskIcon>
        <div className="w-[12px]" />
        <TaskIcon className="w-[20px]"><svg width="20" height="16" viewBox="0 0 20 16"><path d="M1 5h3l4-4v14l-4-4H1z" fill="none" stroke="#fff" /><path d="M11 5c1 2 1 4 0 6M14 3c2 3 2 7 0 10M17 1c2.500 4 2.500 10 0 14" fill="none" stroke="#fff" /></svg></TaskIcon>
        <div className="w-[5px]" />
        <TaskIcon className="w-[22px]"><svg width="21" height="14" viewBox="0 0 21 14"><path d="M2 0v3M5 0v3M1 3h5v3l-1.500 1.500H2.500L1 6zM3.500 8v6" stroke="#fff" fill="none" /><rect x="7.500" y="3.500" width="12" height="8" fill="none" stroke="#fff" /><path d="M11 5l5 5M16 5l-5 5" stroke="#fff" /></svg></TaskIcon>
        <div className="w-[14px]" />
        <div className="h-full flex items-center text-[14px]">22:40</div>
        <div className="w-[24px]" />
        <TaskIcon className="w-[20px]"><svg width="20" height="19" viewBox="0 0 20 19"><path d="M0 0h20v14h-7l-2 3-1-3H0z" fill="#fff" /><path d="M3 4h14M3 7h14M3 10h8" stroke="#1b1c20" /></svg></TaskIcon>
      </div>
    </div>
  )
}
